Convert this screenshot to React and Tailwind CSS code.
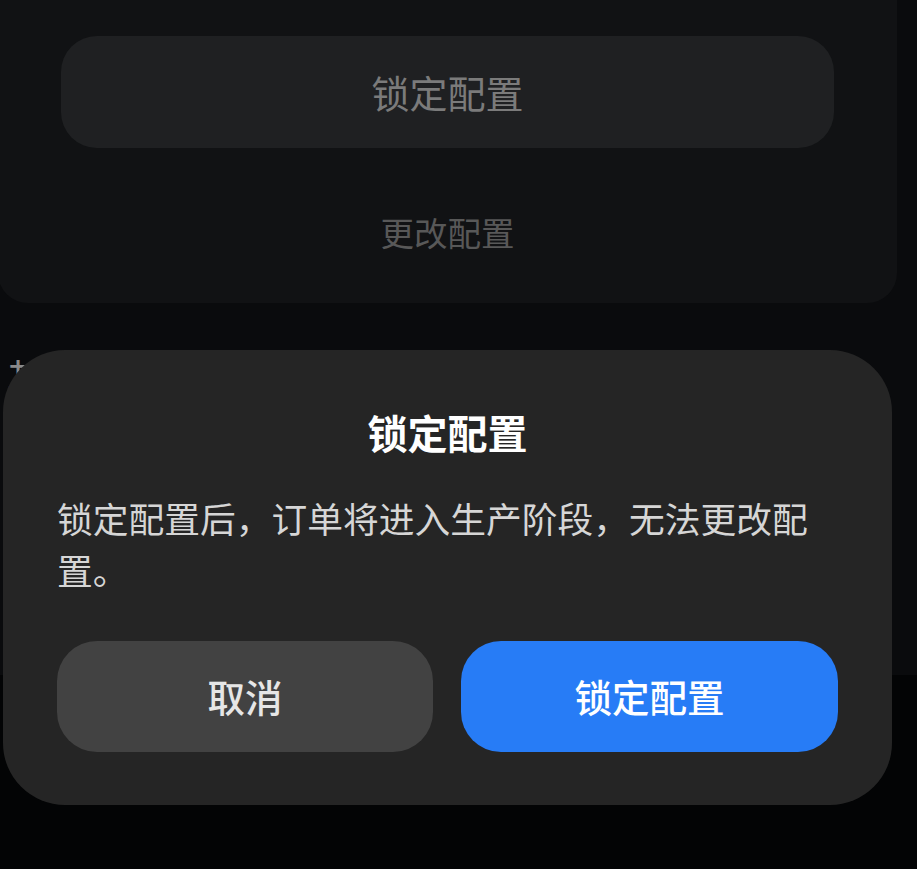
export default function App() {
  const font = { fontFamily: '"Noto Sans CJK SC", "Noto Sans", sans-serif' };
  return (
    <div
      className="relative w-[917px] h-[869px] overflow-hidden bg-[#0a0b0d]"
      style={font}
    >
      {/* background page */}
      <div className="flex flex-col h-full">
        <div className="ml-[-2px] w-[899px] bg-[#111214] rounded-b-[30px] pt-[36px] pb-[53px] px-[63px] flex flex-col items-center">
          <div className="w-full h-[112px] rounded-[36px] bg-[#1f2022] flex items-center justify-center text-[38px] text-[#7b7b7b] leading-none">
            锁定配置
          </div>
          <div className="mt-[66px] h-[36px] flex items-center justify-center text-[33.5px] text-[#585858] leading-none">
            更改配置
          </div>
        </div>
        <div className="h-[372px] pl-[7px] pt-[54px] text-[40px] leading-none text-[#8a8a8a]">
          其他
        </div>
        <div className="flex-1 bg-[#030405]" />
      </div>

      {/* dialog */}
      <div className="absolute left-[3px] top-[350px] w-[889px] h-[455px] rounded-[62px] bg-[#252525] px-[54px] pt-[54px] flex flex-col">
        <div className="h-[56px] flex items-center justify-center text-[40px] font-bold text-white leading-none">
          锁定配置
        </div>
        <p className="mt-[32px] text-[35.75px] leading-[52px] text-[#d6d6d6]">
          锁定配置后，订单将进入生产阶段，无法更改配置。
        </p>
        <div className="mt-[45px] flex gap-[28px]">
          <button className="w-[376px] h-[111px] rounded-[40px] bg-[#424242] text-[37.5px] font-medium text-[#e6e6e6] flex items-center justify-center">
            取消
          </button>
          <button className="w-[377px] h-[111px] rounded-[40px] bg-[#277cf6] text-[37.5px] font-medium text-white flex items-center justify-center">
            锁定配置
          </button>
        </div>
      </div>
    </div>
  );
}
